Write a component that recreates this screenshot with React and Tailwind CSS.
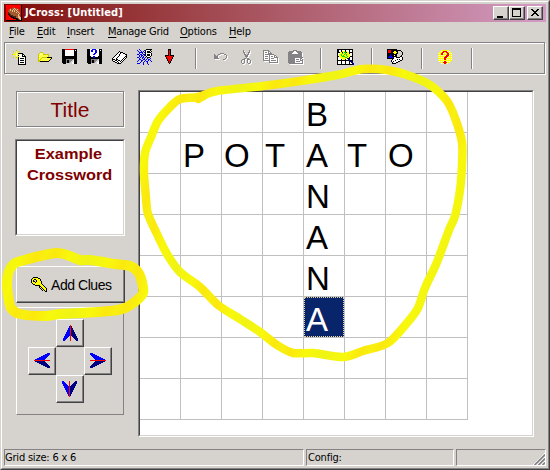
import React from "react";

const PALETTE = {
  k: "#000000", w: "#ffffff", y: "#ffff00", o: "#c8c800", b: "#0000ff", n: "#000080",
  r: "#ff0000", g: "#848284", l: "#d6d3ce", e: "#00e000", t: "#a05a2c", c: "#e8b890", p: "#ffff90",
  d: "#502010",
};

// Draws a bitmap icon from rows of palette letters, one letter per pixel.
function Pixels({ rows, className = "", shadow = false }) {
  const width = Math.max(...rows.map((r) => r.length));
  const runs = [];
  rows.forEach((row, y) => {
    let x = 0;
    while (x < row.length) {
      const ch = row[x];
      let end = x + 1;
      while (end < row.length && row[end] === ch) end++;
      if (PALETTE[ch]) runs.push({ x, y, w: end - x, f: PALETTE[ch] });
      x = end;
    }
  });
  return (
    <svg width={width} height={rows.length} shapeRendering="crispEdges" className={`block shrink-0 overflow-visible ${className}`}>
      {shadow && runs.map((p, i) => <rect key={`s${i}`} x={p.x + 1} y={p.y + 1} width={p.w} height="1" fill="#ffffff" />)}
      {runs.map((p, i) => <rect key={i} x={p.x} y={p.y} width={p.w} height="1" fill={p.f} />)}
    </svg>
  );
}

const APP = [
  "rrrrrrrrrrrrrrrk",
  "rrrrrrrrrrrrrrrk",
  "rrrrrrrtrrrrrrrk",
  "rrrrtrttcttrrrrk",
  "rrrtcttctctctrrk",
  "rrttctctctcttrrk",
  "rrttttctcttcttrk",
  "rrdtttttttctctrk",
  "rrddtttttttttcrk",
  "rrkddtttttttctrk",
  "rrrkdddtttttctrk",
  "rrrrkkddddttccrk",
  "rrrrrkkkddttccck",
  "rrrrrrrkkkkdtcck",
  "rrrrrrrrrrkkdtck",
  "kkkkkkkkkkkkkkkk",
];
const NEW = [
  "....o...........",
  ".o..y..o........",
  "..y.y.y.........",
  "...ywykkkkk.....",
  "oyyywyywwwkk....",
  "...ywykwwwkwk...",
  "..y.y.ywwwkkkk..",
  ".o..oykwwwwwwk..",
  "....y.kwkkkkwk..",
  "......kwwwwwwk..",
  "......kwkkkkwk..",
  "......kwwwwwwk..",
  "......kwkkkkwk..",
  "......kwwwwwwk..",
  "......kkkkkkkk..",
];
const OPEN = [
  "..ooo.........",
  ".opppo........",
  "oppppoooooo...",
  "oypypypypyo...",
  "opypypypypo...",
  "oypyoooookkkkk",
  "opyoypypypypyk",
  "oyoypypypypyk.",
  "ooypypypypyk..",
  "ookkkkkkkkk...",
];
const SAVE = [
  "kkkrrrrrrrrrkkk",
  "kkkwwwwwwwwwkwk",
  "kkkwwwwwwwwwkkk",
  "kkkwwwwwwwwwkkk",
  "kkkwwwwwwwwwkkk",
  "kkkwwwwwwwwwkkk",
  "kkkwwwwwwwwwkkk",
  "kkkkkkkkkkkkkkk",
  "kkkkkkkkkkkkkkk",
  "kkkkkkkkkkkkkkk",
  "kkkkggggggglkkk",
  "kkkkgkkgggllkkk",
  "kkkkgkkggllwkkk",
  "kkkkgkkgllwwkkk",
  ".kkkllllllwwkkk",
];
const SAVEAS = [
  "kkkwwbbbbwwwkkk",
  "kkkwbbwwbbwwkwk",
  "kkkwbbwwbbwwkkk",
  "kkkwwwwwbbwwkkk",
  "kkkwwwwbbwwwkkk",
  "kkkwwwbbwwwwkkk",
  "kkkwwwwwwwwwkkk",
  "kkkkwwbbwwwkkkk",
  "kkkkkkbbkkkkkkk",
  "kkkkkkkkkkkkkkk",
  "kkkkggggggglkkk",
  "kkkkgkkgggllkkk",
  "kkkkgkkggllwkkk",
  "kkkkgkkgllwwkkk",
  ".kkkllllllwwkkk",
];
const BOOK = [
  ".......k........",
  "......kwkkk.....",
  ".....kwwkwwkk...",
  "....kwwkwwwwwkk.",
  "...kwwwkwwwwwwk.",
  "..kwwwkwwwwwwkk.",
  ".kwwwkwwwwwwkwk.",
  "kwwwkwwwwwwkwk..",
  "kkkwkkwwwwkwk...",
  "kwwkkwkkwkwk....",
  ".kkwwkwwkwk.....",
  "...kkwkwwk......",
  ".....kkkk.......",
];
const WEB = [
  "..b......kkkkkk.",
  "b..b...bkwwwwk..",
  ".b..b.b.kwkkkwk.",
  "..bbbb.bkwkkkk..",
  "..b..b..kwwwwwk.",
  "bb.bb.bbkwkkkwk.",
  "..b.bb.bkwkkkwk.",
  "..b.b.b..kwwwk..",
  "bb.b.bb.b.kkk...",
  "..b..b.b..b..b..",
  "..bb..bb.b.bb...",
  ".b..bb..b..b.b..",
  "b...b..b.bb...b.",
  "...b..b...b.....",
  "bbb...b...b.....",
  "......b....b....",
];
const DOWN = [
  "...kkk...",
  "...krk...",
  "...krk...",
  "...krk...",
  "...krk...",
  "...krk...",
  "kkkkrkkkk",
  "krrrrrrrk",
  ".krrrrrk.",
  ".krrrrrk.",
  "..krrrk..",
  "..krrrk..",
  "...krk...",
  "...krk...",
  "....k....",
];
const UNDO = [
  "......gggg...",
  "g...gg....gg.",
  "gg.g........g",
  "gggg........g",
  "gggg........g",
  "ggggg......g.",
  ".........gg..",
];
const CUT = [
  "..g.....g.",
  "..g.....g.",
  "..gg...gg.",
  "...g...g..",
  "...gg.gg..",
  "....ggg...",
  "....ggg...",
  ".....g....",
  "...gg.gg..",
  ".ggg..ggg.",
  "g..g..g..g",
  "g..g..g..g",
  "g..g..g..g",
  ".gg....gg.",
];
const COPY = [
  "gggggg.........",
  "gwwwwgg........",
  "gwggwgwg.......",
  "gwwwwgggg......",
  "gwggggggggg....",
  "gwwwwwgwwwwgg..",
  "gwgggwgwggwgwg.",
  "gwwwwwgwwwwgggg",
  "gwgggwgwgggwwwg",
  "gwwwwwgwwwwwwwg",
  "gggggggwgggggwg",
  "......gwwwwwwwg",
  "......ggggggggg",
];
const PASTE = [
  ".....gggg.....",
  ".gggggwwggggg.",
  "gggggwwwwggggg",
  "ggggwwwwwwgggg",
  "gggggggggggggg",
  "gggggggggggggg",
  "gggggggggggggg",
  "ggggggggggggggg",
  "gggggggwwwwwgg",
  "gggggggwgggwgwg",
  "gggggggwwwwwggg",
  "gggggggwggggwwg",
  "gggggggwwwwwwwg",
  ".gggggggggggggg",
];
const GRID = [
  "kkkkkkkkkkkkkkkk",
  "kkwwkwwwkwwwkwwk",
  "kkwwkyyykywwkwwk",
  "kkkyykyeekyykkkk",
  "kwwyyeyyeyyykwwk",
  "kwyyeyyeyeyyywwk",
  "kwyyeyeyyeyyywwk",
  "kkyyyeeeyyeyykkk",
  "kwwyyyyyeeyykwwk",
  "kwwwyyyyyynnkwwk",
  "kwwwkwyykwwnnwwk",
  "kkkkkkkkkkkknnkk",
  "kwwwkwwwkwwwknnk",
  "kwwwkwwwkwwwkwnn",
  "kwwwkwwwkwwwkwwnn",
  "kkkkkkkkkkkkkkkkn",
];
const CONFIG = [
  "kkkkkkkkkk......",
  "krrrkkkkkkkkkk..",
  "krrrkkkyykk...k.",
  "krrrkkyyyyk....k",
  "kkkkkkkyykk....k",
  "kkkbkkkkkk.....k",
  "kkkbkkkwkk....k.",
  "kkbbbkkkkk...kk.",
  "kbbbbbkwwkkkkwwk",
  "kkkkkkkwwwwwwwwk",
  ".....kwwwwkwkwwk",
  "....kwwwkwwwwkk.",
  "....kwkwwwwkk...",
  ".....kwwwkk.....",
  ".....kkkk.......",
];
const KEY = [
  "..kkkkk.........",
  ".kyyyyykk.......",
  "kyykkyyyyk......",
  "kyk..kyyyk......",
  "kykk.kyyyyk.....",
  "kyyykyyyyyk.....",
  ".kyyyyyyyyk.....",
  "..kkyyyyyyyk....",
  "....kkkkkyyyk...",
  "........kkyyyk..",
  "........kykyyyk.",
  ".........k.kyyyk",
  "..........kykyyk",
  "...........k.kyk",
  "..............kk",
];

// Arrowhead bitmaps: the upward one is the source, the others are flips and transposes of it.
const UP = [
  ".......r.......",
  "......brn......",
  "......brn......",
  ".....bbrnn.....",
  ".....bbrnn.....",
  "....bbbrnnn....",
  "....bbbrnnn....",
  "...bbbbrnnnn...",
  "...bbbbrnnnn...",
  "..bbbbbrnnnnn..",
  "..bbbbbrnnnnn..",
  ".bbbbb.r.nnnnn.",
  ".bbbb..r..nnnn.",
  "bbbb...r...nnnn",
  "bbb....r....nnn",
  "bb.....r.....nn",
];
const DOWNWARD = [...UP].reverse();
const LEFT = [...UP[0]].map((_, x) => UP.map((row) => row[x]).join(""));
const RIGHT = LEFT.map((row) => [...row].reverse().join(""));

const raised = "border border-t-white border-l-white border-r-[#424142] border-b-[#424142] shadow-[inset_-1px_-1px_0_#848284] bg-[#d6d3ce]";

function Divider({ className }) {
  return <div className={`mt-[5px] h-[21px] w-[2px] shrink-0 border-l border-[#848284] bg-white ${className}`} />;
}

function CaptionButton({ children, className = "" }) {
  return <button className={`h-[14px] w-4 p-0 ${raised} ${className}`}><svg width="14" height="12" className="block" shapeRendering="crispEdges">{children}</svg></button>;
}

function MenuItem({ text, className }) {
  return <div className={`shrink-0 whitespace-nowrap ${className}`}><span className="underline underline-offset-2">{text[0]}</span>{text.slice(1)}</div>;
}

function ArrowButton({ rows, className = "" }) {
  return <button className={`flex size-7 items-start ${raised} ${className}`}><Pixels rows={rows} /></button>;
}

// Closed Catmull-Rom curve through the given x,y pairs.
function loop(points) {
  const p = points.split(" ").map((s) => s.split(",").map(Number));
  const n = p.length;
  let d = `M${p[0]}`;
  for (let i = 0; i < n; i++) {
    const a = p[(i + n - 1) % n], b = p[i], c = p[(i + 1) % n], e = p[(i + 2) % n];
    d += `C${b[0] + (c[0] - a[0]) / 7},${b[1] + (c[1] - a[1]) / 7} ${c[0] - (e[0] - b[0]) / 7},${c[1] - (e[1] - b[1]) / 7} ${c}`;
  }
  return d + "Z";
}

const GRID_LOOP = loop("180,99 170,107 158,121 151,137 145,153 144,173 146,198 148,214 157,234 167,254 180,272 200,287 218,305 240,319 260,332 277,345 293,353 313,353 343,357 363,351 388,343 407,323 418,308 425,288 437,262 449,230 455,216 460,190 462,165 462,142 455,118 447,101 430,85 410,76 387,70 363,69 337,75 300,81 263,86 217,91 198,97");
const CLUES_LOOP = loop("7,283 9,271 15,263 25,260 40,256 57,253 67,255 80,260 90,260 103,262 115,264 130,266 138,272 142,282 143,293 136,301 125,308 110,311 80,313 60,314 45,316 20,314 11,308 8,295");

const BOARD = ["    B   ", " POTATO ", "    N   ", "    A   ", "    N   ", "    A   ", "        ", "        "];

export default function App() {
  return (
    <div className="relative h-[470px] w-[550px] overflow-hidden border border-t-[#d6d3ce] border-r-[#424142] border-b-[#424142] border-l-[#d6d3ce] bg-[#d6d3ce] font-['DejaVu_Sans_Condensed','DejaVu_Sans',sans-serif] text-[11px] text-black">
      <div className="flex h-[468px] w-[548px] flex-col border border-t-white border-r-[#848284] border-b-[#848284] border-l-white px-[2px] pt-[2px]">
        <header className="flex h-[18px] w-[542px] shrink-0 items-center bg-linear-to-r from-[#800000] to-[#d29cc4] pr-[3px] pl-[2px]">
          <Pixels rows={APP} />
          <div className="ml-[3px] flex-1 text-[11px] font-bold tracking-[0.1px] whitespace-nowrap text-white">JCross: [Untitled]</div>
          <CaptionButton><path d="M3 9h6v2H3z" /></CaptionButton>
          <CaptionButton><path d="M2 1h9v9H2zM3 3v6h7V3z" fillRule="evenodd" /></CaptionButton>
          <CaptionButton className="ml-[2px]"><path d="M3 2h2v1h1v1h2V3h1V2h2v1h-1v1H9v1H8v1h1v1h1v1h1v1H9V8H8V7H6v1H5v1H3V8h1V7h1V6h1V5H5V4H4V3H3z" /></CaptionButton>
        </header>

        <nav className="flex h-5 shrink-0 items-center pt-px pl-[5px] tracking-[-0.22px]">
          <MenuItem text="File" className="w-7" />
          <MenuItem text="Edit" className="w-[30px]" />
          <MenuItem text="Insert" className="w-[41px]" />
          <MenuItem text="Manage Grid" className="w-[72px]" />
          <MenuItem text="Options" className="w-[49px]" />
          <MenuItem text="Help" className="w-10" />
        </nav>

        <div className="flex h-8 w-[541px] shrink-0 items-start border border-[#848284] pl-[7px] shadow-[inset_1px_1px_0_#fff,1px_1px_0_#fff]">
          <Pixels rows={NEW} className="mt-[7px]" />
          <Pixels rows={OPEN} className="mt-[9px] ml-[10px]" />
          <Pixels rows={SAVE} className="mt-[6px] ml-[10px]" />
          <Pixels rows={SAVEAS} className="mt-[6px] ml-[10px]" />
          <Pixels rows={BOOK} className="mt-[8px] ml-[10px]" />
          <Pixels rows={WEB} className="mt-[6px] ml-[9px]" />
          <Pixels rows={DOWN} className="mt-[6px] ml-[12px]" />
          <Divider className="ml-[21px]" />
          <Pixels rows={UNDO} shadow className="mt-[10px] ml-[17px]" />
          <Pixels rows={CUT} shadow className="mt-[7px] ml-[14px]" />
          <Pixels rows={COPY} shadow className="mt-[7px] ml-[12px]" />
          <Pixels rows={PASTE} shadow className="mt-[7px] ml-[10px]" />
          <Divider className="ml-[17px]" />
          <Pixels rows={GRID} className="mt-[6px] ml-[15px]" />
          <Divider className="ml-[17px]" />
          <Pixels rows={CONFIG} className="mt-[6px] ml-[14px]" />
          <Divider className="ml-[18px]" />
          <svg width="16" height="16" className="mt-[6px] ml-[14px] shrink-0" shapeRendering="crispEdges">
            <defs><pattern id="dither" width="2" height="2" patternUnits="userSpaceOnUse"><rect width="2" height="2" fill="#ff0" /><rect width="1" height="1" fill="#fff" /></pattern></defs>
            <circle cx="8" cy="8" r="7.5" fill="url(#dither)" />
            <path d="M6 2h4v1h1v1h1v3h-1v1h-1v1H9v2H7V8h1V7h1V6h1V4H9V3H7v1H6v2H4V4h1V3h1zM7 12h2v1h1v1H9v1H7v-1H6v-1h1z" fill="#f00" />
          </svg>
          <Divider className="ml-[18px]" />
        </div>

        <main className="flex h-[375px] shrink-0 pt-[16px]">
          <aside className="flex w-[134px] shrink-0 flex-col pl-[12px] font-['Liberation_Sans',sans-serif]">
            <div className="mt-px flex h-9 w-[108px] shrink-0 items-center justify-center border border-[#848284] text-[21px] leading-none text-[#800000] shadow-[inset_1px_1px_0_#fff,1px_1px_0_#fff]">Title</div>
            <div className="mt-3 -ml-px h-[97px] w-[110px] shrink-0 border border-t-[#848284] border-r-white border-b-white border-l-[#848284] bg-[#d6d3ce]">
              <div className="h-[95px] w-[108px] border border-t-[#424142] border-r-[#d6d3ce] border-b-[#d6d3ce] border-l-[#424142] bg-white pt-[2px] pr-[3px] text-center text-[15px] leading-[21px] font-bold text-[#800000]">
                <div className="origin-center scale-x-[1.09]">Example<br /><span className="ml-[2px]">Crossword</span></div>
              </div>
            </div>
            <button className={`mt-[30px] flex h-[37px] w-[109px] shrink-0 items-start pt-[10px] pl-[14px] ${raised}`}>
              <Pixels rows={KEY} />
              <span className="ml-[4px] text-[14px] leading-[17px] tracking-[-0.45px] whitespace-nowrap">Add Clues</span>
            </button>
            <div className="mt-[4px] grid h-[108px] w-[108px] shrink-0 grid-cols-[28px_28px_28px] grid-rows-[28px_28px_28px] content-start border border-t-white border-r-[#848284] border-b-[#848284] border-l-white pt-[11px] pl-[11px]">
              <ArrowButton rows={UP} className="col-start-2 pt-[5px] pl-[6px]" />
              <ArrowButton rows={LEFT} className="col-start-1 row-start-2 pt-[5px] pl-[5px]" />
              <ArrowButton rows={RIGHT} className="col-start-3 row-start-2 pt-[5px] pl-[5px]" />
              <ArrowButton rows={DOWNWARD} className="col-start-2 row-start-3 pt-[5px] pl-[5px]" />
            </div>
          </aside>

          <section className="h-[347px] w-[396px] shrink-0 border border-t-[#848284] border-r-white border-b-white border-l-[#848284]">
            <div className="h-[345px] w-[394px] border border-t-[#424142] border-r-[#d6d3ce] border-b-[#d6d3ce] border-l-[#424142] bg-white">
              <div className="grid w-[328px] grid-cols-8 font-['Liberation_Sans',sans-serif] text-[33px]">
                {BOARD.flatMap((row, y) => [...row].map((letter, x) => {
                  const selected = x === 4 && y === 5;
                  return (
                    <div key={`${x}-${y}`} className="h-[41px] w-[41px] border-r border-b border-[#c0c0c0]">
                      <div className={selected ? "h-10 w-10 border border-dotted border-[#e8d8a0] bg-[#08246b] pl-px leading-[43px] text-white" : "h-10 w-10 pl-[2px] leading-[45px]"}>{letter}</div>
                    </div>
                  );
                }))}
              </div>
            </div>
          </section>
        </main>

        <footer className="flex h-[17px] w-[542px] shrink-0 gap-[2px] leading-[16px] tracking-[-0.2px]">
          <div className="w-[300px] border border-t-[#848284] border-r-white border-b-white border-l-[#848284]">Grid size: 6 x 6</div>
          <div className="w-[148px] border border-t-[#848284] border-r-white border-b-white border-l-[#848284] pl-px">Config:</div>
          <div className="flex w-[90px] items-end justify-end border border-t-[#848284] border-r-white border-b-white border-l-[#848284]">
            <svg width="12" height="12"><path d="M0 12L12 0M4 12l8-8M8 12l4-4" stroke="#fff" /><path d="M1.5 12L12 1.5M5.5 12L12 5.5M9.5 12L12 9.5" stroke="#848284" strokeWidth="1.6" /></svg>
          </div>
        </footer>
      </div>

      <svg width="550" height="470" className="pointer-events-none absolute -top-px -left-px" fill="none" strokeLinecap="round" strokeLinejoin="round">
        <defs>
          <linearGradient id="marker" x1="0" y1="0" x2="40" y2="14" gradientUnits="userSpaceOnUse" spreadMethod="reflect">
            <stop offset="0" stopColor="#f0f414" /><stop offset=".45" stopColor="#f8f80c" /><stop offset=".8" stopColor="#fbe80e" /><stop offset="1" stopColor="#f8f010" />
          </linearGradient>
        </defs>
        <g stroke="url(#marker)" strokeWidth="8.5">
          <path d={GRID_LOOP} />
          <path d="M205 95L198 99" />
          <path d={CLUES_LOOP} strokeWidth="10" />
        </g>
      </svg>
    </div>
  );
}
